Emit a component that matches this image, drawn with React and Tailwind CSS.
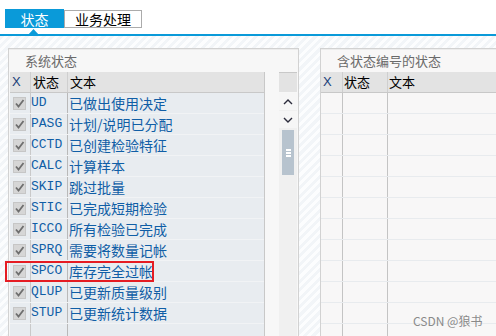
import React from "react";

const rows = [
  ["UD", "已做出使用决定"],
  ["PASG", "计划/说明已分配"],
  ["CCTD", "已创建检验特征"],
  ["CALC", "计算样本"],
  ["SKIP", "跳过批量"],
  ["STIC", "已完成短期检验"],
  ["ICCO", "所有检验已完成"],
  ["SPRQ", "需要将数量记帐"],
  ["SPCO", "库存完全过帐"],
  ["QLUP", "已更新质量级别"],
  ["STUP", "已更新统计数据"],
];

const cjk = "font-['Noto_Sans_CJK_SC',sans-serif]";

function Check() {
  return (
    <div className="w-[13px] h-[13px] bg-[#d6d6d6] border border-[#c6c6c6] flex items-center justify-center">
      <svg width="11" height="11" viewBox="0 0 11 11">
        <path d="M2 5.5 L4.5 8.5 L9.5 2" fill="none" stroke="#6e6e6e" strokeWidth="1.8" />
      </svg>
    </div>
  );
}

export default function App() {
  return (
    <div className={`w-[496px] h-[336px] overflow-hidden relative bg-white ${cjk}`}>
      {/* tabs */}
      <div className="h-[34px] flex items-start pt-[9px] pl-[5px]">
        <div className="w-[59px] h-[19px] bg-[#0a9ad9] text-white text-[14px] leading-none flex items-center justify-center">
          状态
        </div>
        <div className="mt-[1px] w-[78px] h-[18px] border border-[#ababab] bg-white text-black text-[14px] leading-none flex items-center justify-center">
          业务处理
        </div>
      </div>
      <div className="h-[2px] bg-[#0a9ad9] relative">
        <svg className="absolute left-[28px] top-[-5px]" width="11" height="6" viewBox="0 0 11 6">
          <path d="M0 6 L5.5 0 L11 6 Z" fill="#0a9ad9" />
        </svg>
      </div>
      {/* content */}
      <div className="h-[300px] flex items-start pt-[12px] pl-[8px] gap-[21px] bg-[repeating-linear-gradient(135deg,#f2f5f8_0px,#f2f5f8_3px,#fcfdfe_3px,#fcfdfe_6px)]">
        {/* left panel */}
        <div className="w-[291px] h-[300px] shrink-0 border border-[#d2d2d2] bg-[#f7f7f7]">
          <div className="h-[23px] pl-[16px] flex items-center text-[13px] text-[#6a6a6a] border-t border-[#ececec]">
            系统状态
          </div>
          <div className="flex">
            <div className="ml-[1px] w-[255px] border-r border-[#c8c8c8] bg-[#e8ecf0]">
              <div className="h-[21px] flex bg-[#e3e3e3] border-b border-[#c8c8c8] text-[13px] text-black">
                <div className="w-[21px] border-r border-[#cfcfcf] pl-[2px] flex items-center font-['Liberation_Sans',sans-serif] text-[#1a3f7a]">X</div>
                <div className="w-[37px] border-r border-[#cfcfcf] pl-[2px] flex items-center">状态</div>
                <div className="flex-1 pl-[2px] flex items-center">文本</div>
              </div>
              {rows.map(([c, t]) => (
                <div key={c} className="h-[21px] flex border-b border-[#f1f3f5] text-[#105ea6]">
                  <div className="w-[21px] border-r border-[#c9c9c9] pl-[3px] flex items-center">
                    <Check />
                  </div>
                  <div className="w-[37px] border-r border-[#b9b9b9] flex items-center text-[13px] font-['Liberation_Mono',monospace]">
                    {c}
                  </div>
                  <div className="flex-1 pl-[1px] flex items-center text-[14px] leading-none">{t}</div>
                </div>
              ))}
              <div className="h-[30px] flex">
                <div className="w-[21px] border-r border-[#c9c9c9]"></div>
                <div className="w-[37px] border-r border-[#b9b9b9]"></div>
              </div>
            </div>
            {/* scrollbar */}
            <div className="ml-[14px] w-[18px] bg-[#f0f0f0] flex flex-col">
              <div className="h-[21px] bg-[#e3e3e3] border-t border-[#c8c8c8] border-b border-b-[#f7f7f7]"></div>
              <div className="h-[17px] bg-[#f6f6f6] flex items-center justify-center">
                <svg width="10" height="6" viewBox="0 0 10 6">
                  <path d="M1 5 L5 1 L9 5" fill="none" stroke="#2c2c3c" strokeWidth="1.4" />
                </svg>
              </div>
              <div className="h-[1px] bg-[#f0f0f0]"></div>
              <div className="h-[17px] bg-[#f6f6f6] flex items-center justify-center">
                <svg width="10" height="6" viewBox="0 0 10 6">
                  <path d="M1 1 L5 5 L9 1" fill="none" stroke="#2c2c3c" strokeWidth="1.4" />
                </svg>
              </div>
              <div className="mt-[2px] mx-[3px] h-[45px] bg-[#b7c3ce] flex flex-col items-center justify-center gap-[1px]">
                <div className="w-[5px] h-[2px] bg-white"></div>
                <div className="w-[5px] h-[2px] bg-white"></div>
                <div className="w-[5px] h-[2px] bg-white"></div>
              </div>
            </div>
          </div>
        </div>
        {/* right panel */}
        <div className="w-[200px] h-[300px] shrink-0 border border-[#d2d2d2] border-r-0 bg-[#f8f7f7]">
          <div className="h-[23px] pl-[16px] flex items-center text-[13px] text-[#6a6a6a] border-t border-[#ececec]">
            含状态编号的状态
          </div>
          <div className="h-[21px] flex bg-[#e3e3e3] border-b border-[#c8c8c8] text-[13px] text-black">
            <div className="w-[22px] border-r border-[#cfcfcf] pl-[2px] flex items-center font-['Liberation_Sans',sans-serif] text-[#1a3f7a]">X</div>
            <div className="w-[45px] border-r border-[#cfcfcf] pl-[1px] flex items-center">状态</div>
            <div className="flex-1 pl-[1px] flex items-center">文本</div>
          </div>
          {Array.from({ length: 12 }).map((_, i) => (
            <div key={i} className="h-[21px] flex border-b border-[#e8ebee]">
              <div className="w-[22px] border-r border-[#c4c4c4]"></div>
              <div className="w-[45px] border-r border-[#c4c4c4]"></div>
              <div className="flex-1"></div>
            </div>
          ))}
        </div>
      </div>
      {/* red highlight */}
      <div className="absolute left-[5px] top-[261px] w-[149px] h-[21px] border-2 border-[#e51c23]"></div>
      {/* watermark */}
      <div className="absolute left-[413px] top-[312px] text-[12px] text-[#8a8a8a] font-['Noto_Sans_CJK_SC',sans-serif]">
        CSDN @狼书
      </div>
    </div>
  );
}
